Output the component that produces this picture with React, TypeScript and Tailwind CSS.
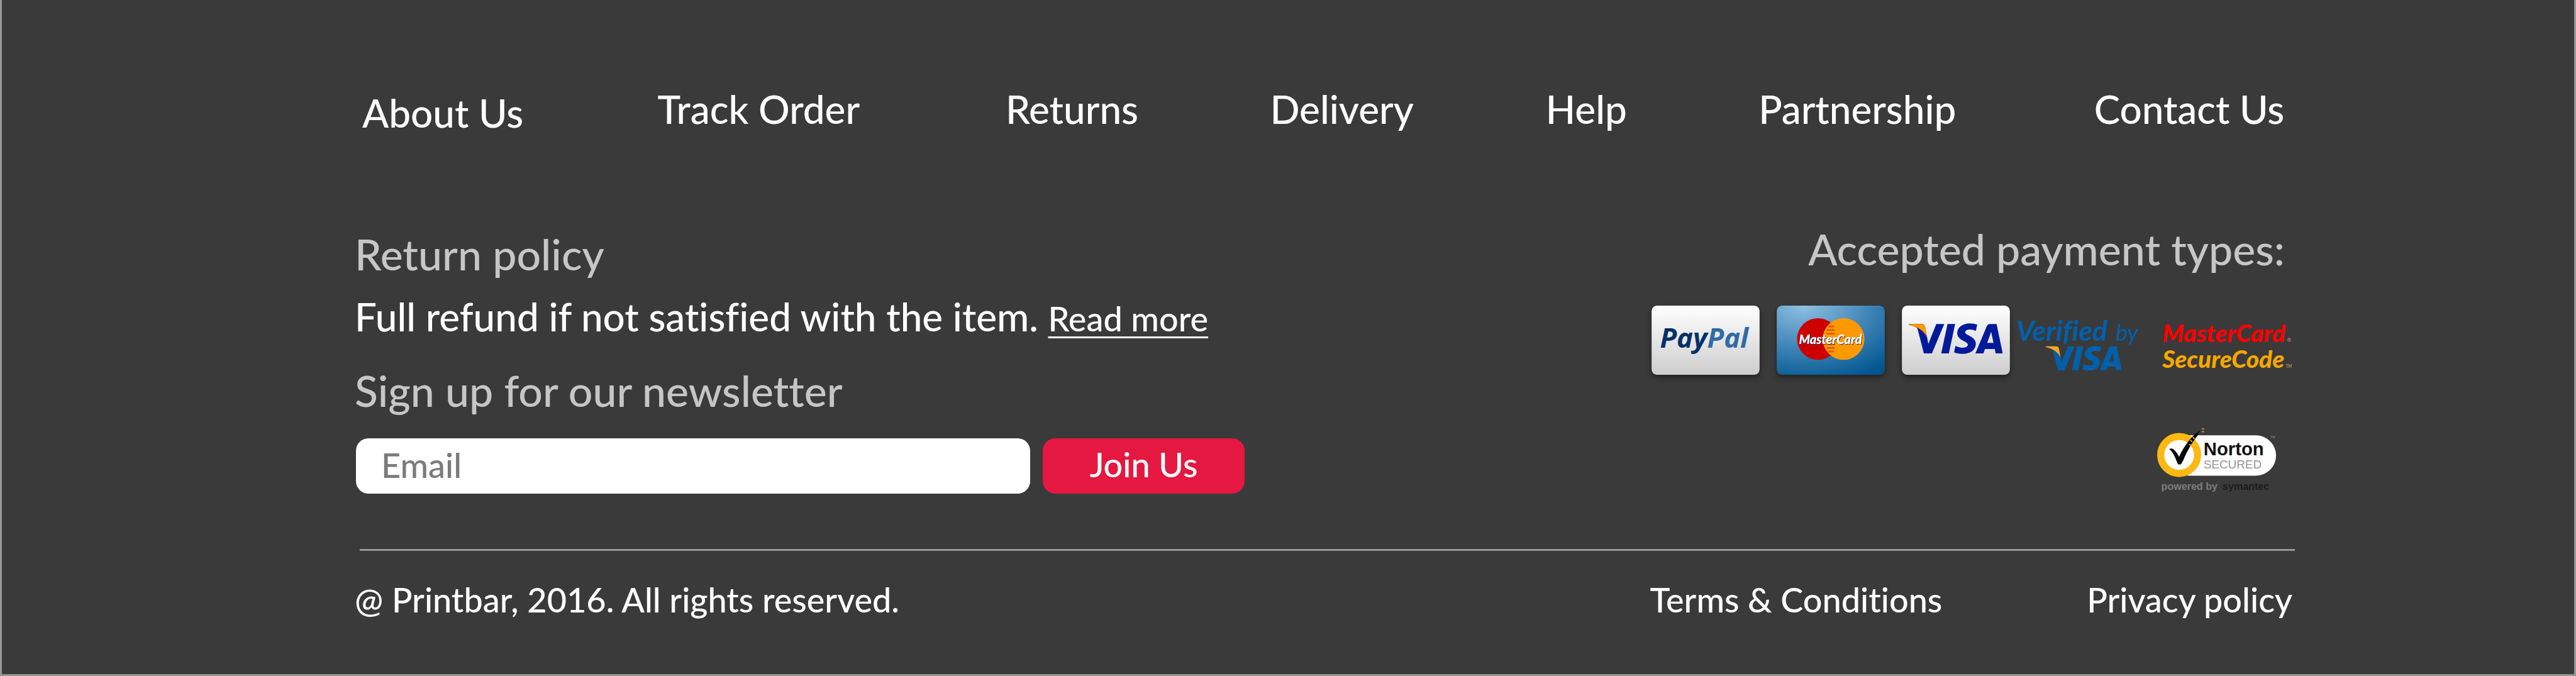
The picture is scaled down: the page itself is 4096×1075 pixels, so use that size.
import { SiVisa } from "react-icons/si";

const NAV_LINKS = ["About Us", "Track Order", "Returns", "Delivery", "Help", "Partnership", "Contact Us"];

function VisaWordmark({ x, y, width, color, wing }: { x: number; y: number; width: number; color: string; wing: string }) {
  return (
    <svg x={x} y={y} width={width} height={(width * 8) / 24} viewBox="0 8 24 8">
      <SiVisa x="0" y="0" size={24} color={color} />
      <path d="M0 8.479l.046-.217h3.3a.904.904 0 01.894.764l.5 2.7C4.1 10.2 2.5 8.95 0 8.479z" fill={wing} />
    </svg>
  );
}

function PayPalCard() {
  return (
    <svg role="img" aria-label="PayPal" viewBox="0 0 181 116" className="h-[110px] w-[172px] rounded-lg shadow-[0_4px_8px_rgba(0,0,0,0.45)]">
      <defs>
        <linearGradient id="silver-paypal" x1="0" y1="0" x2="0" y2="1">
          <stop offset="0" stopColor="#ffffff" />
          <stop offset="1" stopColor="#cdcdcd" />
        </linearGradient>
      </defs>
      <rect width="181" height="116" rx="9" fill="url(#silver-paypal)" />
      <text x="14" y="71" fontFamily='"Open Sans", sans-serif' fontSize="46" fontWeight="700" fontStyle="italic">
        <tspan fill="#063068">Pay</tspan>
        <tspan fill="#2f6ca6">Pal</tspan>
      </text>
    </svg>
  );
}

function MasterCardCard() {
  return (
    <svg role="img" aria-label="MasterCard" viewBox="0 0 181 116" className="h-[110px] w-[172px] rounded-lg shadow-[0_4px_8px_rgba(0,0,0,0.45)]">
      <defs>
        <radialGradient id="mc-blue" cx="0.25" cy="0" r="1.15">
          <stop offset="0" stopColor="#8fc0e2" />
          <stop offset="0.55" stopColor="#3d83b5" />
          <stop offset="1" stopColor="#00558f" />
        </radialGradient>
        <filter id="mc-shadow" x="-10%" y="-20%" width="120%" height="150%">
          <feDropShadow dx="1" dy="1" stdDeviation="0.6" floodColor="#1d2a5c" floodOpacity="1" />
        </filter>
      </defs>
      <rect width="181" height="116" rx="9" fill="url(#mc-blue)" />
      <circle cx="69" cy="56" r="35" fill="#cc0000" />
      <circle cx="112" cy="56" r="35" fill="#ff9900" />
      <path d="M86 35h10M84 41h13M83 47h14M83 65h14M84 71h13M86 77h10" stroke="#e05a00" strokeWidth="3" />
      <text x="90" y="64" textAnchor="middle" fontFamily="Lato, sans-serif" fontSize="21" fontWeight="900" fontStyle="italic" fill="#ffffff" filter="url(#mc-shadow)">
        MasterCard
      </text>
    </svg>
  );
}

function VisaCard() {
  return (
    <svg role="img" aria-label="Visa" viewBox="0 0 181 116" className="h-[110px] w-[172px] rounded-lg shadow-[0_4px_8px_rgba(0,0,0,0.45)]">
      <defs>
        <linearGradient id="silver-visa" x1="0" y1="0" x2="0" y2="1">
          <stop offset="0" stopColor="#ffffff" />
          <stop offset="1" stopColor="#cdcdcd" />
        </linearGradient>
      </defs>
      <rect width="181" height="116" rx="9" fill="url(#silver-visa)" />
      <VisaWordmark x={11} y={29} width={158} color="#001a99" wing="#ff9900" />
    </svg>
  );
}

function VerifiedByVisa() {
  return (
    <svg role="img" aria-label="Verified by Visa" viewBox="0 0 204 116" className="h-[110px] w-[193px] overflow-visible">
      <g fontFamily="Lato, sans-serif" fontStyle="italic" fill="#0060ab">
        <text x="-3" y="59" fontSize="47" fontWeight="700">Verified</text>
        <text x="164" y="59" fontSize="38" fontWeight="400">by</text>
      </g>
      <VisaWordmark x={46} y={67} width={128} color="#0060ab" wing="#faa61a" />
    </svg>
  );
}

function SecureCode() {
  return (
    <svg role="img" aria-label="MasterCard SecureCode" viewBox="0 0 218 116" className="h-[110px] w-[207px] overflow-visible">
      <g fontFamily="Lato, sans-serif" fontStyle="italic" fontWeight="900">
        <text x="0" y="61" fontSize="41" fill="#ff0000">MasterCard</text>
        <text x="0" y="104" fontSize="41" fill="#f5a800">SecureCode</text>
        <text x="209" y="61" fontSize="9" fill="#b56a6a">®</text>
        <text x="207" y="104" fontSize="7" fill="#a58a4a">TM</text>
      </g>
    </svg>
  );
}

function NortonSecured() {
  return (
    <svg role="img" aria-label="Norton Secured, powered by Symantec" viewBox="0 0 202 110" className="h-[104px] w-[191px]">
      <rect x="20" y="14" width="180" height="68" rx="34" fill="#ffffff" />
      <circle cx="37" cy="47" r="31" fill="#ffffff" stroke="#fdb913" strokeWidth="12" />
      <path d="M20 37c6-3 11 2 17 13 8-17 17-29 27-38l8-7-3 8C59 26 50 41 44 56l-4 7h-5C30 50 26 41 20 37z" fill="#080808" />
      <path d="M56 22l3 3M60 17l3 3M54 29l3 2" stroke="#fdb913" strokeWidth="2" />
      <path d="M75 3h4M75 8h4" stroke="#c49a3a" strokeWidth="2" />
      <g fontFamily='"Liberation Sans", sans-serif'>
        <text x="78" y="48" fontSize="31" fontWeight="700" fill="#111111">Norton</text>
        <text x="78" y="70" fontSize="20" fill="#969696">SECURED</text>
        <text x="190" y="19" fontSize="6" fill="#8f8f8f">TM</text>
        <text x="7" y="106" fontSize="17" fontWeight="700" fill="#7d7d7d">powered by</text>
        <text x="110" y="106" fontSize="17" fontWeight="700" fill="#1c1c1c">symantec</text>
      </g>
    </svg>
  );
}

export default function App() {
  return (
    <footer className="min-h-screen border-x-3 border-b-3 border-[#979797] bg-[#3a3a3a] pt-[137px] pr-[444px] pb-[84px] pl-[561px] font-[Lato,sans-serif] font-medium text-white [font-variant-ligatures:no-common-ligatures]">
      <nav
        aria-label="Footer"
        className="ml-3 grid h-[78px] grid-cols-[469fr_553fr_420fr_438fr_338fr_533fr_319fr] items-start text-[62px] leading-[72px] whitespace-nowrap"
      >
        {NAV_LINKS.map((label) => (
          <a key={label} href="#" className="justify-self-start first:self-end">
            {label}
          </a>
        ))}
      </nav>

      <div className="mt-[141px] flex justify-between">
        <div className="pt-2">
          <h2 className="text-[68px] leading-[80px] text-[#c6c6c6]">Return policy</h2>
          <p className="mt-[23px] text-[62px] leading-[72px] whitespace-nowrap">
            Full refund if not satisfied with the item.{" "}
            <a href="#" className="text-[54px] leading-none underline decoration-3 underline-offset-8">
              Read more
            </a>
          </p>
          <h2 className="mt-[42px] text-[68px] leading-[80px] text-[#c6c6c6]">
            <label htmlFor="email">Sign up for our newsletter</label>
          </h2>
          <form className="mt-9 ml-0.5 flex gap-5 text-[54px] leading-[64px]" onSubmit={(e) => e.preventDefault()}>
            <input
              id="email"
              type="email"
              placeholder="Email"
              className="h-[88px] w-[1072px] rounded-[20px] bg-white px-10 pb-1 text-[#3a3a3a] placeholder:text-[#7b7b7b]"
            />
            <button type="submit" className="h-[88px] w-[321px] rounded-[20px] bg-[#e41840] pb-1 text-white">
              Join Us
            </button>
          </form>
        </div>

        <div className="flex flex-col items-end">
          <h2 className="mr-4 text-[68px] leading-[80px] text-[#c6c6c6]">Accepted payment types:</h2>
          <div className="mt-[50px] mr-1 flex items-center gap-[13px]">
            <div className="flex gap-[27px]">
              <PayPalCard />
              <MasterCardCard />
              <VisaCard />
            </div>
            <div className="flex gap-9">
              <VerifiedByVisa />
              <SecureCode />
            </div>
          </div>
          <div className="mt-[83px] mr-7">
            <NortonSecured />
          </div>
        </div>
      </div>

      <hr className="mt-[88px] ml-2 h-[3px] border-0 bg-[#979797]" />

      <div className="mt-[46px] flex justify-between pr-1 text-[54px] leading-[64px] whitespace-nowrap">
        <p>@ Printbar, 2016. All rights reserved.</p>
        <div className="flex gap-[230px]">
          <a href="#">Terms &amp; Conditions</a>
          <a href="#">Privacy policy</a>
        </div>
      </div>
    </footer>
  );
}
